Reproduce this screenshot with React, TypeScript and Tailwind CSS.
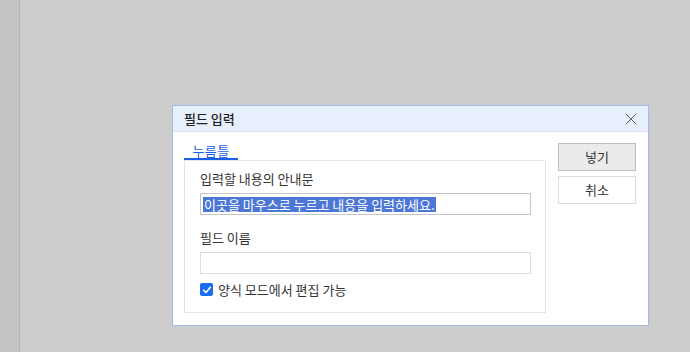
import { X } from 'lucide-react';

const font = { fontFamily: '"Noto Sans CJK KR", "Noto Sans", sans-serif' };

export default function App() {
  return (
    <div className="flex w-[690px] h-[352px] overflow-hidden text-[#333]" style={font}>
      {/* left strip */}
      <div className="w-[20px] h-full bg-[#c4c4c4] border-r border-[#b3b3b3] shrink-0" />

      <div className="flex-1 h-full bg-[#cdcdcd] pl-[152px] pt-[105px]">
        {/* Dialog */}
        <div className="w-[477px] h-[221px] border border-[#a3b9e8] bg-white flex flex-col">
          <div className="h-[26px] bg-[#e8effc] border-b border-[#d6e0f5] flex items-center justify-between pl-[11px] pr-[7px] shrink-0">
            <span className="text-[13px] font-medium text-[#222] leading-none">필드 입력</span>
            <X className="w-[20px] h-[20px] text-[#555]" strokeWidth={1.1} />
          </div>

          <div className="flex pl-[11px] pt-[11px] gap-[12px]">
            {/* left column */}
            <div className="w-[362px] flex flex-col">
              <div className="w-[54px] h-[17px] border-b-2 border-[#1b5fe6] flex items-end justify-center pb-[1px]">
                <span className="text-[13px] leading-none text-[#1b5fe6] tracking-[0.3px]">누름틀</span>
              </div>
              <div className="h-[153px] border border-[#e3e3e3] border-t-[#e8e8e8] pl-[15px] pt-[10px] flex flex-col">
                <span className="text-[13px] leading-[16px] h-[16px] text-[#333]">입력할 내용의 안내문</span>
                <div className="mt-[6px] w-[331px] h-[22px] border border-[#c4c4c4] flex items-center pl-[2px]">
                  <span className="bg-[#4c77d6] text-white text-[13px] leading-[15px] px-[1px]">
                    이곳을 마우스로 누르고 내용을 입력하세요.
                  </span>
                </div>
                <span className="mt-[15px] text-[13px] leading-[16px] h-[16px] text-[#333]">필드 이름</span>
                <div className="mt-[6px] w-[331px] h-[22px] border border-[#dedede]" />
                <label className="mt-[9px] flex items-center gap-[5px]">
                  <span className="w-[13px] h-[13px] rounded-[2px] bg-[#1a6cf0] flex items-center justify-center">
                    <svg viewBox="0 0 12 12" className="w-[10px] h-[10px]">
                      <path d="M2 6.3 L4.8 9 L10 2.8" stroke="white" strokeWidth="2" fill="none" strokeLinecap="round" strokeLinejoin="round" />
                    </svg>
                  </span>
                  <span className="text-[13px] leading-none text-[#333]">양식 모드에서 편집 가능</span>
                </label>
              </div>
            </div>

            {/* buttons */}
            <div className="flex flex-col gap-[5px]">
              <button className="w-[78px] h-[28px] bg-[#ebebeb] border border-[#bdbdbd] text-[13px] text-[#333] flex items-center justify-center">
                넣기
              </button>
              <button className="w-[78px] h-[28px] bg-white border border-[#dcdcdc] text-[13px] text-[#333] flex items-center justify-center">
                취소
              </button>
            </div>
          </div>
        </div>
      </div>
    </div>
  );
}
